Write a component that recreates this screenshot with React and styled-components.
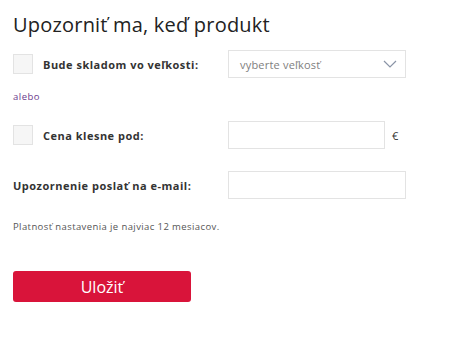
import React from "react";
import styled, { createGlobalStyle } from "styled-components";

const GlobalStyle = createGlobalStyle`
  body {
    margin: 0;
    background: #fff;
    font-family: "Open Sans", "Liberation Sans", sans-serif;
    color: #333;
  }
`;

const App = () => {
  return (
    <Wrapper>
      <GlobalStyle />
      <Title>Upozorniť ma, keď produkt</Title>
      <Row>
        <CheckLabel>
          <Box />
          <Label>Bude skladom vo veľkosti:</Label>
        </CheckLabel>
        <Select>
          <span>vyberte veľkosť</span>
          <svg width="14" height="8" viewBox="0 0 14 8">
            <path d="M1 1l6 6 6-6" fill="none" stroke="#8a94a6" strokeWidth="1.2" />
          </svg>
        </Select>
      </Row>
      <Or>alebo</Or>
      <Row top={18}>
        <CheckLabel>
          <Box />
          <Label>Cena klesne pod:</Label>
        </CheckLabel>
        <Field>
          <Input width={157} />
          <Unit>€</Unit>
        </Field>
      </Row>
      <Row top={22}>
        <Label>Upozornenie poslať na e-mail:</Label>
        <Input width={178} />
      </Row>
      <Note>Platnosť nastavenia je najviac 12 mesiacov.</Note>
      <SaveButton>Uložiť</SaveButton>
    </Wrapper>
  );
};

export default App;

const Wrapper = styled.div`
  padding: 13px 13px;
`;

const Title = styled.h1`
  margin: 0;
  font-family: "Open Sans", sans-serif;
  font-weight: 400;
  font-size: 20px;
  line-height: 24px;
  color: #222;
  letter-spacing: 0.2px;
`;

const Row = styled.div`
  display: grid;
  grid-template-columns: 215px auto;
  align-items: center;
  margin-top: ${(p) => p.top || 13}px;
`;

const CheckLabel = styled.div`
  display: flex;
  align-items: center;
  gap: 10px;
`;

const Box = styled.span`
  width: 18px;
  height: 18px;
  background: #f6f6f6;
  border: 1px solid #e3e3e3;
`;

const Label = styled.span`
  font-size: 11px;
  font-weight: 700;
  letter-spacing: 0.5px;
  color: #333;
`;

const Select = styled.div`
  width: 178px;
  height: 28px;
  box-sizing: border-box;
  border: 1px solid #e3e3e3;
  display: flex;
  align-items: center;
  justify-content: space-between;
  padding: 0 8px 0 11px;
  font-size: 11px;
  letter-spacing: 0.2px;
  color: #808080;
`;

const Field = styled.div`
  display: flex;
  align-items: center;
  gap: 7px;
`;

const Input = styled.div`
  width: ${(p) => p.width}px;
  height: 28px;
  box-sizing: border-box;
  border: 1px solid #e3e3e3;
  background: #fff;
`;

const Unit = styled.span`
  font-size: 11px;
  color: #333;
`;

const Or = styled.div`
  margin-top: 12px;
  font-size: 9.5px;
  letter-spacing: 0.5px;
  color: #6b3a8c;
`;

const Note = styled.div`
  margin-top: 21px;
  font-size: 9.5px;
  letter-spacing: 0.4px;
  color: #555;
`;

const SaveButton = styled.button`
  display: block;
  margin-top: 38px;
  width: 178px;
  height: 31px;
  border: 0;
  border-radius: 3px;
  background: #d9143a;
  color: #fff;
  font-family: "Open Sans", sans-serif;
  font-size: 16px;
  cursor: pointer;
`;
